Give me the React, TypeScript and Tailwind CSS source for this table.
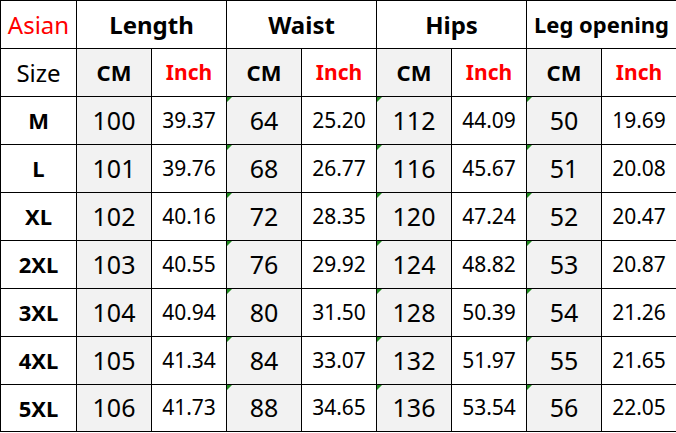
import React from 'react';

// Size chart rows: size label, then cm/inch pairs for length, waist, hips, leg opening
const rows: [string, string, string, string, string, string, string, string, string][] = [
  ['M', '100', '39.37', '64', '25.20', '112', '44.09', '50', '19.69'],
  ['L', '101', '39.76', '68', '26.77', '116', '45.67', '51', '20.08'],
  ['XL', '102', '40.16', '72', '28.35', '120', '47.24', '52', '20.47'],
  ['2XL', '103', '40.55', '76', '29.92', '124', '48.82', '53', '20.87'],
  ['3XL', '104', '40.94', '80', '31.50', '128', '50.39', '54', '21.26'],
  ['4XL', '105', '41.34', '84', '33.07', '132', '51.97', '55', '21.65'],
  ['5XL', '106', '41.73', '88', '34.65', '136', '53.54', '56', '22.05'],
];

const groups = ['Length', 'Waist', 'Hips', 'Leg opening'];

// little green corner mark, like excel's "number stored as text"
function Flag() {
  return (
    <svg className="absolute left-0 top-0" width="5" height="5" viewBox="0 0 5 5">
      <polygon points="0,0 5,0 0,5" fill="#1f8a1f" />
    </svg>
  );
}

export default function App() {
  const cell = 'border border-black text-center align-middle p-0';
  return (
    <div className="w-[676px] h-[433px] bg-white" style={{ fontFamily: '"Noto Sans", "Open Sans", sans-serif' }}>
      <table className="table-fixed border-collapse w-[676px] text-black">
        <colgroup>
          <col className="w-[76px]" />
          {Array.from({ length: 8 }).map((_, i) => (
            <col key={i} className="w-[75px]" />
          ))}
        </colgroup>
        <tbody>
          <tr className="h-[48px]">
            <td className={`${cell} text-[24px] text-[#ff0000]`}>Asian</td>
            {groups.map((g) => (
              <td
                key={g}
                colSpan={2}
                className={`${cell} font-bold ${g === 'Leg opening' ? 'text-[22px]' : 'text-[24px]'}`}
              >
                {g}
              </td>
            ))}
          </tr>
          <tr className="h-[48px]">
            <td className={`${cell} text-[24px]`}>Size</td>
            {groups.map((g) => (
              <React.Fragment key={g}>
                <td className={`${cell} bg-[#f2f2f2] font-bold text-[22px]`}>CM</td>
                <td className={`${cell} font-bold text-[21px] text-[#ff0000]`}>Inch</td>
              </React.Fragment>
            ))}
          </tr>
          {rows.map((r, ri) => (
            <tr key={r[0]} className={ri === rows.length - 1 ? 'h-[47px]' : 'h-[48px]'}>
              <td className={`${cell} font-bold text-[22px]`}>{r[0]}</td>
              {r.slice(1).map((v, i) => {
                const isCm = i % 2 === 0;
                return (
                  <td
                    key={i}
                    className={`${cell} relative ${isCm ? 'bg-[#f2f2f2] text-[25px]' : 'text-[21px]'}`}
                  >
                    {isCm && i > 0 && <Flag />}
                    {v}
                  </td>
                );
              })}
            </tr>
          ))}
        </tbody>
      </table>
    </div>
  );
}
